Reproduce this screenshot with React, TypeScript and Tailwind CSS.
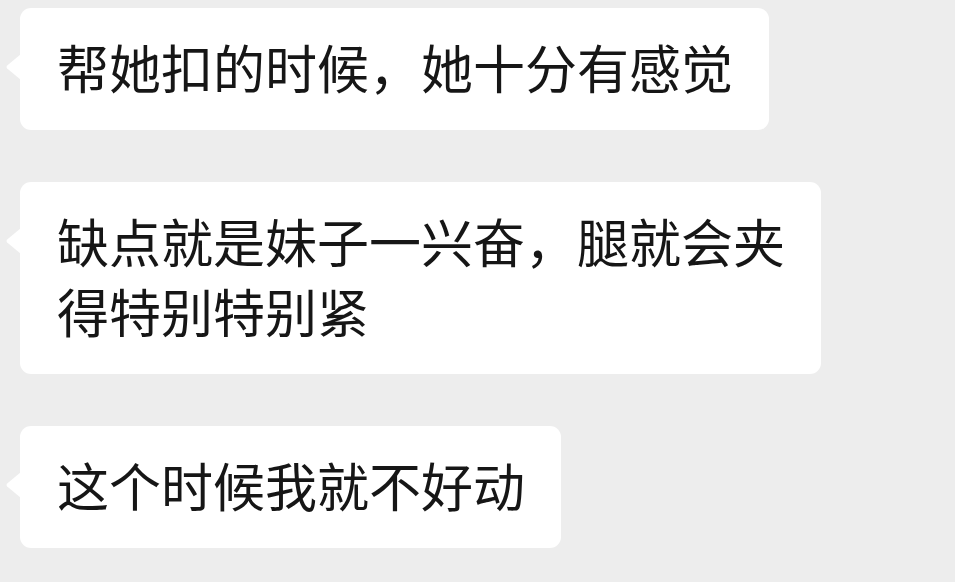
const messages: string[][] = [
  ['帮她扣的时候，她十分有感觉'],
  ['缺点就是妹子一兴奋，腿就会夹', '得特别特别紧'],
  ['这个时候我就不好动'],
]

function BubbleTail() {
  return (
    <svg
      className="absolute left-[-15px] top-[46px]"
      width="16"
      height="26"
      viewBox="0 0 16 26"
      aria-hidden="true"
    >
      <path d="M16 0 L16 26 L2.2 14.4 Q0.6 13 2.2 11.6 Z" fill="#ffffff" />
    </svg>
  )
}

function Bubble({ lines }: { lines: string[] }) {
  return (
    <div className="relative w-fit rounded-[11px] bg-white pl-[37px] pr-[36px] pt-[24px] pb-[28px]">
      <BubbleTail />
      {lines.map((line) => (
        <div key={line} className="whitespace-nowrap text-[52px] leading-[70px] text-[#161616]">
          {line}
        </div>
      ))}
    </div>
  )
}

export default function App() {
  return (
    <div
      className="flex h-[582px] w-[955px] flex-col gap-[52px] overflow-hidden bg-[#ededed] pl-[20px] pt-[8px]"
      style={{ fontFamily: '"Noto Sans CJK SC", "Noto Sans", sans-serif' }}
    >
      {messages.map((lines, i) => (
        <Bubble key={i} lines={lines} />
      ))}
    </div>
  )
}
